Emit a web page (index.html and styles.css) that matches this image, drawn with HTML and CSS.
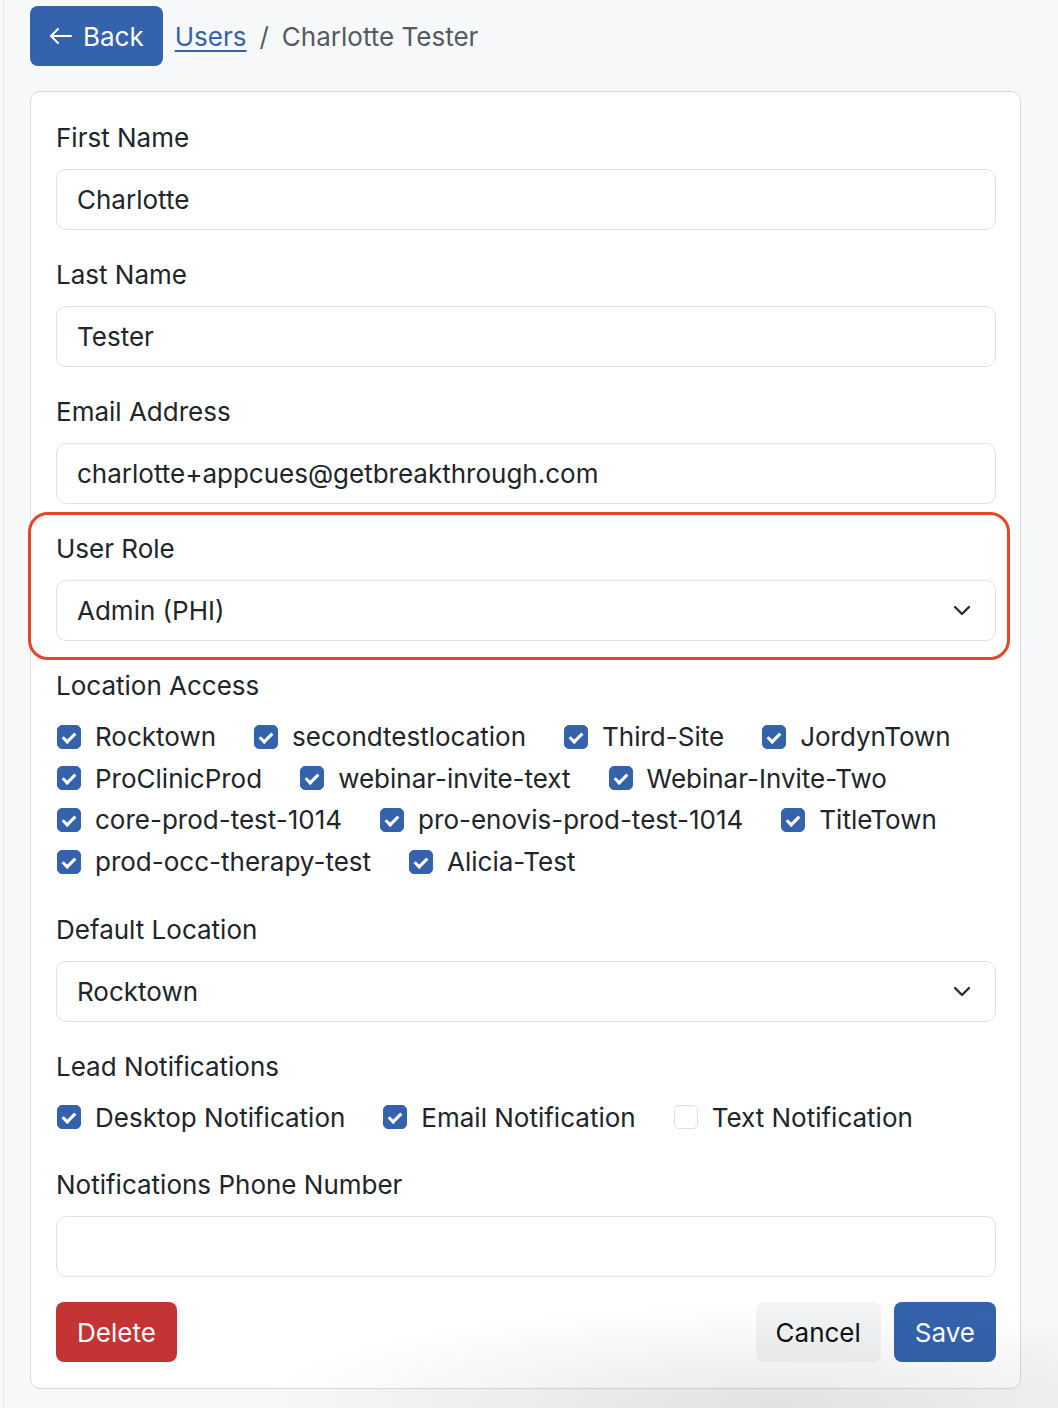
FILE: index.html
```html
<!DOCTYPE html>
<html lang="en">

<head>
  <meta charset="UTF-8" />
  <meta name="viewport" content="width=device-width, initial-scale=1.0" />
  <title>Charlotte Tester - Users</title>
  <link rel="stylesheet" href="styles.css">
</head>

<body>
  <div class="page">
    <div class="topbar">
      <a class="btn btn-back" href="#">
        <svg width="24" height="24" viewBox="0 0 24 24" fill="none" stroke="currentColor" stroke-width="2" stroke-linecap="round" stroke-linejoin="round">
          <path d="M22 12H2" />
          <path d="M9 5l-7 7 7 7" />
        </svg>
        Back
      </a>
      <nav class="crumbs">
        <a href="#">Users</a>
        <span class="crumb-sep">/</span>
        <span class="crumb-current">Charlotte Tester</span>
      </nav>
    </div>

    <form class="card" id="user-form">
      <div class="field">
        <label for="first-name">First Name</label>
        <input type="text" id="first-name" value="Charlotte" />
      </div>

      <div class="field">
        <label for="last-name">Last Name</label>
        <input type="text" id="last-name" value="Tester" />
      </div>

      <div class="field">
        <label for="email">Email Address</label>
        <input type="text" id="email" value="charlotte+appcues@getbreakthrough.com" />
      </div>

      <div class="field field-marked">
        <label for="role">User Role</label>
        <div class="select-wrap">
          <select id="role">
            <option>Admin (PHI)</option>
            <option>Admin</option>
            <option>User</option>
          </select>
          <svg class="chevron" width="20" height="20" viewBox="0 0 20 20" fill="none" stroke="currentColor" stroke-width="2.4" stroke-linecap="round" stroke-linejoin="round">
            <path d="M3 7l7 7 7-7" />
          </svg>
        </div>
      </div>

      <div class="field">
        <label>Location Access</label>
        <div class="checks">
          <label class="check"><span class="box on"></span>Rocktown</label>
          <label class="check"><span class="box on"></span>secondtestlocation</label>
          <label class="check"><span class="box on"></span>Third-Site</label>
          <label class="check"><span class="box on"></span>JordynTown</label>
          <label class="check"><span class="box on"></span>ProClinicProd</label>
          <label class="check"><span class="box on"></span>webinar-invite-text</label>
          <label class="check"><span class="box on"></span>Webinar-Invite-Two</label>
          <label class="check"><span class="box on"></span>core-prod-test-1014</label>
          <label class="check"><span class="box on"></span>pro-enovis-prod-test-1014</label>
          <label class="check"><span class="box on"></span>TitleTown</label>
          <label class="check"><span class="box on"></span>prod-occ-therapy-test</label>
          <label class="check"><span class="box on"></span>Alicia-Test</label>
        </div>
      </div>

      <div class="field">
        <label for="default-location">Default Location</label>
        <div class="select-wrap">
          <select id="default-location">
            <option>Rocktown</option>
            <option>secondtestlocation</option>
          </select>
          <svg class="chevron" width="20" height="20" viewBox="0 0 20 20" fill="none" stroke="currentColor" stroke-width="2.4" stroke-linecap="round" stroke-linejoin="round">
            <path d="M3 7l7 7 7-7" />
          </svg>
        </div>
      </div>

      <div class="field">
        <label>Lead Notifications</label>
        <div class="checks">
          <label class="check"><span class="box on"></span>Desktop Notification</label>
          <label class="check"><span class="box on"></span>Email Notification</label>
          <label class="check"><span class="box"></span>Text Notification</label>
        </div>
      </div>

      <div class="field">
        <label for="phone">Notifications Phone Number</label>
        <input type="text" id="phone" value="" />
      </div>

      <div class="actions">
        <button type="button" class="btn btn-delete">Delete</button>
        <div class="actions-right">
          <button type="button" class="btn btn-cancel">Cancel</button>
          <button type="submit" class="btn btn-save">Save</button>
        </div>
      </div>
    </form>
  </div>
</body>

</html>
```
FILE: styles.css
```css
body {
  font-family: Inter, "Open Sans", sans-serif;
  font-size: 26px;
  line-height: 39px;
  color: #212529;
  background-color: #f7f8fa;
  margin: 0;
  padding: 0;
  height: 1408px;
  position: relative;
  overflow: hidden;
}

/* soft shadow at the bottom of the window */
body::after {
  content: "";
  position: absolute;
  left: 120px;
  right: 0;
  bottom: 0;
  height: 130px;
  background: radial-gradient(ellipse 70% 100% at 70% 100%, rgba(0, 0, 0, 0.09), rgba(0, 0, 0, 0) 80%);
  pointer-events: none;
}

.page {
  margin-left: 3px;
  border-left: 1px solid #e3e5e8;
  padding: 6px 37px 0 26px;
  min-height: 1402px;
}

.topbar {
  display: flex;
  align-items: center;
  gap: 12px;
  height: 60px;
  margin-bottom: 25px;
}

.btn {
  display: inline-flex;
  align-items: center;
  height: 60px;
  padding: 0 21px;
  border: none;
  border-radius: 8px;
  font-family: inherit;
  font-size: 26px;
  cursor: pointer;
  text-decoration: none;
  box-sizing: border-box;
}

.btn-back {
  background-color: #3462ab;
  color: #fff;
  gap: 10px;
  padding: 0 19px;
}

.crumbs {
  display: flex;
  align-items: center;
  color: #555a60;
}

.crumbs a {
  color: #3462ab;
  text-decoration: underline;
  text-underline-offset: 4px;
  text-decoration-thickness: 2px;
}

.crumb-sep {
  margin: 0 13px;
}

.card {
  display: block;
  background-color: #fff;
  border: 1px solid #d9dbdf;
  border-radius: 10px;
  padding: 26px 24px 25px 25px;
  position: relative;
}

.field {
  margin-bottom: 25px;
  position: relative;
}

.field > label {
  display: block;
  margin-bottom: 12px;
}

input[type="text"],
select {
  display: block;
  width: 100%;
  height: 61px;
  box-sizing: border-box;
  padding: 0 20px;
  border: 1px solid #dfe1e5;
  border-radius: 10px;
  font-family: inherit;
  font-size: 26px;
  color: #212529;
  background-color: #fff;
  outline: none;
}

select {
  appearance: none;
  -webkit-appearance: none;
}

.select-wrap {
  position: relative;
}

.chevron {
  position: absolute;
  right: 24px;
  top: 20px;
  color: #2b2f33;
  pointer-events: none;
}

/* red outline around the role picker */
.field-marked::before {
  content: "";
  position: absolute;
  left: -28px;
  right: -14px;
  top: -17px;
  bottom: -19px;
  border: 3px solid #e6452a;
  border-radius: 20px;
  pointer-events: none;
}

.checks {
  display: flex;
  flex-wrap: wrap;
  column-gap: 37px;
  row-gap: 2.7px;
  margin-top: 1px;
  margin-bottom: 28.5px;
}

.check {
  display: flex;
  align-items: center;
  gap: 14px;
  padding-left: 1px;
}

.box {
  width: 24px;
  height: 24px;
  border-radius: 5px;
  box-sizing: border-box;
  border: 1px solid #dcdfe3;
  background-color: #fff;
  position: relative;
  flex-shrink: 0;
}

.box.on {
  background-color: #3462ab;
  border-color: #3462ab;
}

/* white tick */
.box.on::after {
  content: "";
  position: absolute;
  left: 7px;
  top: 4px;
  width: 5px;
  height: 10px;
  border: solid #fff;
  border-width: 0 3px 3px 0;
  transform: rotate(45deg);
}

.actions {
  display: flex;
  justify-content: space-between;
  margin-top: 25px;
  padding-bottom: 1px;
}

.actions-right {
  display: flex;
  gap: 13px;
}

.btn-delete {
  background-color: #c53434;
  color: #fff;
}

.btn-cancel {
  background-color: #f3f4f6;
  color: #111;
  padding: 0 20px;
}

.btn-save {
  background-color: #3462ab;
  color: #fff;
}

button:hover {
  opacity: 0.9;
}
```
